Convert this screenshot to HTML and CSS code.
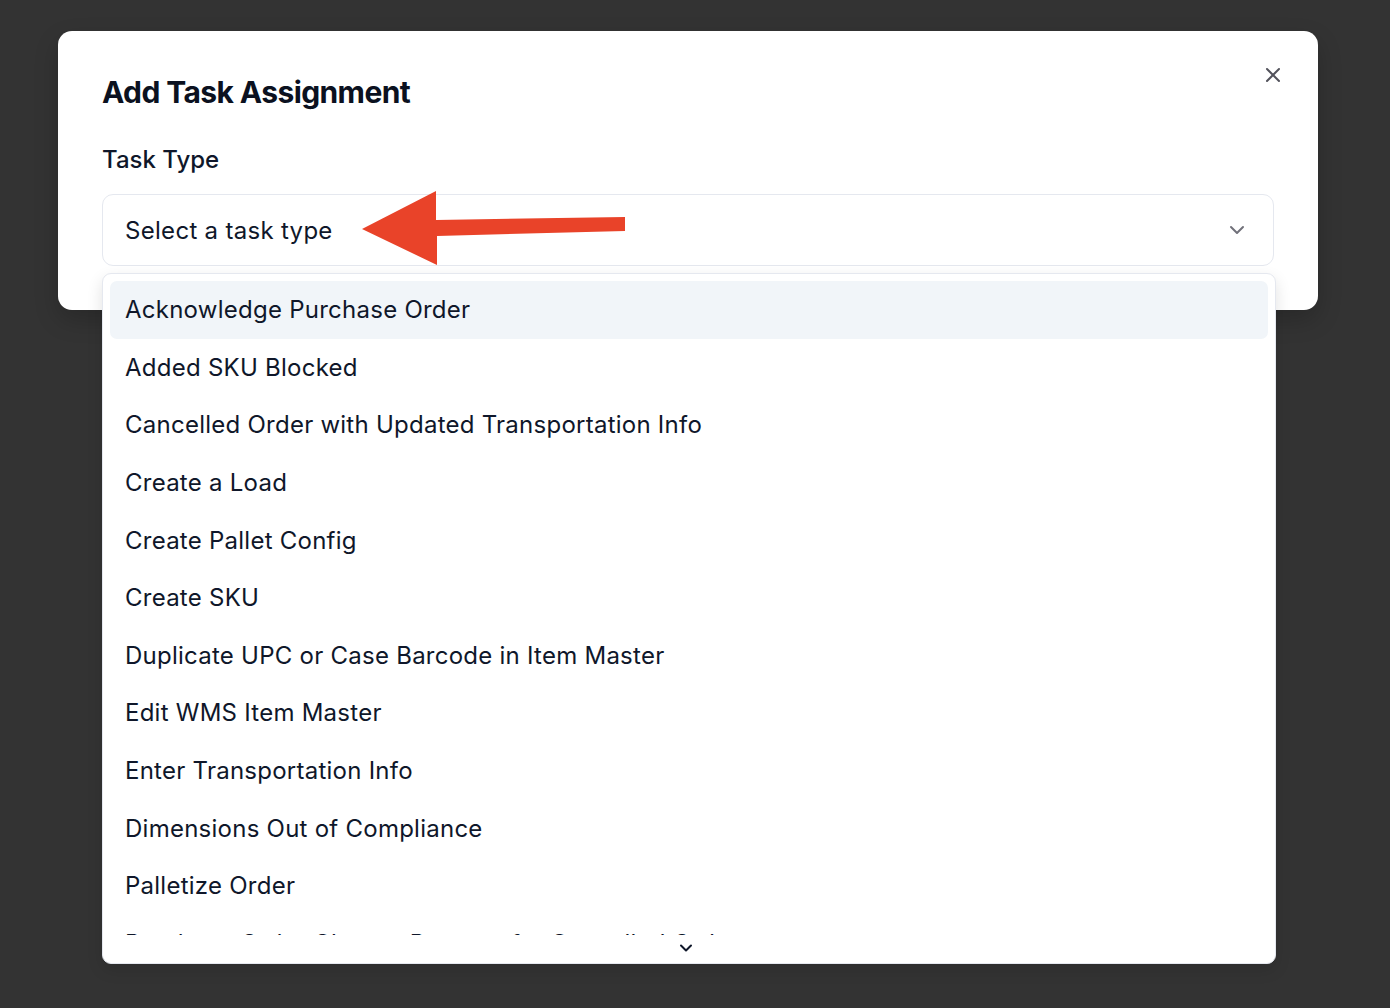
FILE: index.html
```html
<!DOCTYPE html>
<html>
<head>
    <title>Add Task Assignment</title>
    <link rel="stylesheet" href="styles.css">
</head>
<body>
    <div class="dialog">
        <button class="close-btn" aria-label="Close">
            <svg width="24" height="24" viewBox="0 0 24 24" fill="none" stroke="currentColor" stroke-width="2" stroke-linecap="round">
                <path d="M18 6 6 18M6 6l12 12"/>
            </svg>
        </button>
        <h2 class="dialog-title">Add Task Assignment</h2>
        <label class="field-label">Task Type</label>
        <div class="select-wrap">
            <button class="select-trigger">
                <span>Select a task type</span>
                <svg class="trigger-chevron" width="24" height="24" viewBox="0 0 24 24" fill="none" stroke="currentColor" stroke-width="2" stroke-linecap="round" stroke-linejoin="round">
                    <path d="m6 9 6 6 6-6"/>
                </svg>
            </button>

            <!-- red annotation arrow drawn over the trigger -->
            <svg class="annotation" width="530" height="80" viewBox="0 -5 530 80">
                <polygon fill="#e94329" points="260,35 334,-3 334,26 523,23 523,37 335,42 335,71"/>
            </svg>

            <div class="select-menu">
                <div class="menu-viewport">
                    <div class="option active">Acknowledge Purchase Order</div>
                    <div class="option">Added SKU Blocked</div>
                    <div class="option">Cancelled Order with Updated Transportation Info</div>
                    <div class="option">Create a Load</div>
                    <div class="option">Create Pallet Config</div>
                    <div class="option">Create SKU</div>
                    <div class="option">Duplicate UPC or Case Barcode in Item Master</div>
                    <div class="option">Edit WMS Item Master</div>
                    <div class="option">Enter Transportation Info</div>
                    <div class="option">Dimensions Out of Compliance</div>
                    <div class="option">Palletize Order</div>
                    <div class="option">Purchase Order Change Request for Cancelled Order</div>
                </div>
                <div class="scroll-down">
                    <svg width="20" height="20" viewBox="0 0 24 24" fill="none" stroke="currentColor" stroke-width="2.4" stroke-linecap="round" stroke-linejoin="round">
                        <path d="m6 9 6 6 6-6"/>
                    </svg>
                </div>
            </div>
        </div>
    </div>
</body>
</html>
```

FILE: styles.css
```css
body {
    margin: 0;
    padding: 31px 0 0 58px;
    background: #333333;
    font-family: Inter, "Noto Sans", sans-serif;
    color: #0f172a;
    height: 100vh;
    box-sizing: border-box;
    overflow: hidden;
}
.dialog {
    position: relative;
    width: 1260px;
    box-sizing: border-box;
    padding: 43px 44px 44px 44px;
    background: #fff;
    border-radius: 14px;
    box-shadow: 0 10px 25px rgba(0, 0, 0, 0.2);
}
.close-btn {
    position: absolute;
    top: 32px;
    right: 33px;
    width: 24px;
    height: 24px;
    padding: 0;
    border: none;
    background: none;
    color: #52525b;
    display: flex;
}
.dialog-title {
    margin: 0;
    font-size: 30px;
    line-height: 36px;
    font-weight: 700;
    letter-spacing: -0.6px;
    color: #0b1120;
}
.field-label {
    display: block;
    margin-top: 35px;
    font-size: 24px;
    line-height: 29px;
    font-weight: 500;
    color: #0f172a;
}
.select-wrap {
    position: relative;
    margin-top: 20px;
}
.select-trigger {
    width: 100%;
    height: 72px;
    display: flex;
    align-items: center;
    justify-content: space-between;
    padding: 0 24px 0 22px;
    border: 1px solid #e5e8ef;
    border-radius: 11px;
    background: #fff;
    font-family: inherit;
    font-size: 24px;
    letter-spacing: 0.3px;
    color: #0f172a;
    box-sizing: border-box;
}
.trigger-chevron {
    color: #71717a;
}
.annotation {
    position: absolute;
    left: 0;
    top: -5px;
    pointer-events: none;
}
.select-menu {
    position: absolute;
    top: calc(100% + 7px);
    left: 0;
    width: 1174px;
    box-sizing: border-box;
    padding: 7px 7px 0 7px;
    background: #fff;
    border: 1px solid #e5e8ef;
    border-radius: 9px;
    box-shadow: 0 6px 16px rgba(0, 0, 0, 0.12);
    z-index: 2;
}
.menu-viewport {
    height: 654px;
    overflow: hidden;
}
.option {
    height: 57.6px;
    display: flex;
    align-items: center;
    padding-left: 15px;
    border-radius: 7px;
    font-size: 24px;
    letter-spacing: 0.25px;
    color: #0f172a;
}
.option.active {
    background: #f1f5f9;
}
.scroll-down {
    height: 28px;
    display: flex;
    justify-content: center;
    align-items: flex-start;
    padding-top: 3px;
    box-sizing: border-box;
    color: #0f172a;
    margin-left: -7px;
}
```
